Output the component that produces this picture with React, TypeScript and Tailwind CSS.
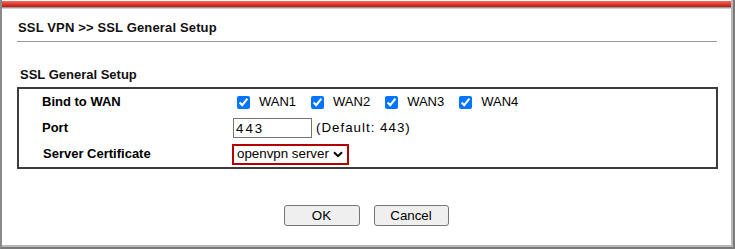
import React from "react";

const font = { fontFamily: '"Liberation Sans", Arial, sans-serif' };

function Check({ label }: { label: string }) {
  return (
    <label className="flex items-center gap-[9px] mr-[15px]">
      <input type="checkbox" defaultChecked className="w-[13px] h-[13px] m-0 accent-[#0075ff]" />
      <span className="text-[13px] text-black">{label}</span>
    </label>
  );
}

export default function App() {
  return (
    <div className="w-[735px] h-[249px] bg-white relative overflow-hidden" style={font}>
      <div className="w-full h-full flex flex-col border-l-2 border-[#8a8a8a] border-r-2 border-b-2 border-r-[#7a7a7a] border-b-[#7a7a7a]">
        <div className="flex-1 flex flex-col border-r-2 border-b-2 border-[#b8b8b8]">
          {/* top red bar */}
          <div className="h-[1px] bg-white" />
          <div className="h-[6px] bg-gradient-to-b from-[#f26a5e] via-[#e0382c] to-[#b51d18]" />
          <div className="h-[1px] bg-[#9a9a9a]" />
          <div className="h-[1px] bg-[#cfcfcf]" />
          {/* title */}
          <div className="pl-[16px] pt-[11px] h-[16px] box-content text-[13px] font-bold text-[#111] leading-[16px] tracking-[0.15px]">
            SSL VPN &gt;&gt; SSL General Setup
          </div>
          <div className="ml-[15px] mt-[5px] w-[700px] h-[1px] bg-[#999]" />
          {/* section */}
          <div className="pl-[18px] mt-[25px] text-[13px] font-bold text-[#111] leading-[16px]">
            SSL General Setup
          </div>
          <div className="ml-[15px] mt-[4px] w-[701px] border-2 border-[#3c3c3c] flex flex-col">
            <div className="flex items-center h-[26px]">
              <div className="w-[218px] pl-[23px] text-[13px] font-bold text-black">Bind to WAN</div>
              <div className="flex items-center">
                <Check label="WAN1" />
                <Check label="WAN2" />
                <Check label="WAN3" />
                <Check label="WAN4" />
              </div>
            </div>
            <div className="flex items-center h-[26px]">
              <div className="w-[214px] pl-[23px] text-[13px] font-bold text-black">Port</div>
              <input
                type="text"
                defaultValue="443"
                className="w-[79px] h-[20px] border border-[#767676] px-[2px] text-[13.33px] tracking-[2px] text-black outline-none"
              />
              <span className="ml-[4px] text-[13.33px] text-black tracking-[1px]">(Default: 443)</span>
            </div>
            <div className="flex items-center h-[26px]">
              <div className="w-[213px] pl-[24px] text-[13px] font-bold text-black">Server Certificate</div>
              <div className="h-[21px] w-[117px] border-2 border-[#b40000] flex items-center pl-[3px] pr-[4px] justify-between">
                <span className="text-[13.33px] text-black">openvpn server</span>
                <svg width="10" height="7" viewBox="0 0 10 7">
                  <path d="M1 1.2 L5 5.2 L9 1.2" fill="none" stroke="#000" strokeWidth="2" />
                </svg>
              </div>
            </div>
          </div>
          {/* buttons */}
          <div className="flex justify-center gap-[14px] mt-[36px] pr-[1px]">
            <button className="w-[76px] h-[21px] bg-[#efefef] border border-[#767676] rounded-[3px] text-[13.33px] text-black leading-none">
              OK
            </button>
            <button className="w-[75px] h-[21px] bg-[#efefef] border border-[#767676] rounded-[3px] text-[13.33px] text-black leading-none">
              Cancel
            </button>
          </div>
        </div>
      </div>
    </div>
  );
}
